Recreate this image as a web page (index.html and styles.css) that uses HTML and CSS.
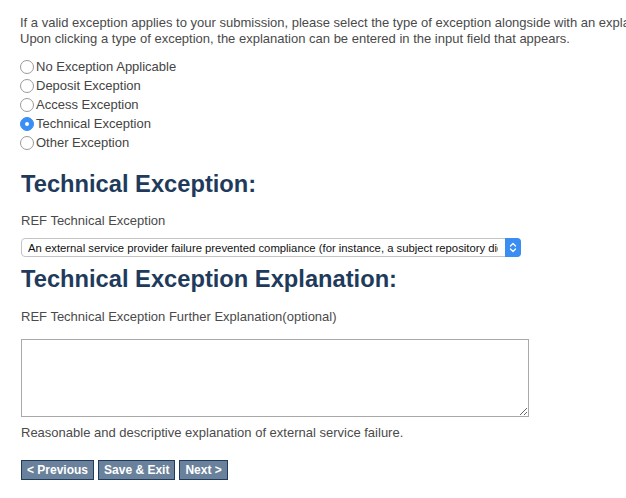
FILE: index.html
```html
<!DOCTYPE html>
<html>
<head>
<meta charset="utf-8">
<link rel="stylesheet" href="styles.css">
</head>
<body>
<div class="page">
  <p class="intro">If a valid exception applies to your submission, please select the type of exception alongside with an explanation.<br>Upon clicking a type of exception, the explanation can be entered in the input field that appears.</p>
  <div class="radios">
    <label class="radio"><input type="radio" name="ex">No Exception Applicable</label>
    <label class="radio"><input type="radio" name="ex">Deposit Exception</label>
    <label class="radio"><input type="radio" name="ex">Access Exception</label>
    <label class="radio"><input type="radio" name="ex" checked>Technical Exception</label>
    <label class="radio"><input type="radio" name="ex">Other Exception</label>
  </div>
  <h2 class="heading first">Technical Exception:</h2>
  <p class="label">REF Technical Exception</p>
  <div class="select-wrap">
    <select class="select">
      <option>An external service provider failure prevented compliance (for instance, a subject repository did not respond)</option>
    </select>
    <span class="stepper"><svg width="8" height="11" viewBox="0 0 8 11"><path d="M1.5 4 L4 1.5 L6.5 4 M1.5 7 L4 9.5 L6.5 7" fill="none" stroke="#fff" stroke-width="1.3" stroke-linecap="round" stroke-linejoin="round"/></svg></span>
  </div>
  <h2 class="heading second">Technical Exception Explanation:</h2>
  <p class="label second">REF Technical Exception Further Explanation(optional)</p>
  <textarea class="area"></textarea>
  <p class="help">Reasonable and descriptive explanation of external service failure.</p>
  <div class="buttons">
    <button class="btn">&lt; Previous</button>
    <button class="btn">Save &amp; Exit</button>
    <button class="btn">Next &gt;</button>
  </div>
</div>
</body>
</html>
```
FILE: styles.css
```css
html, body {
  margin: 0;
  padding: 0;
  background: #fff;
  overflow: hidden;
}
body {
  font-family: "Liberation Sans", Arial, sans-serif;
  font-size: 13px;
  color: #4a4a4a;
}
.page {
  padding: 15px 0 0 20px;
  width: 640px;
}
.intro {
  margin: 0;
  line-height: 16px;
  white-space: nowrap;
}
.radios {
  margin-top: 10px;
  display: flex;
  flex-direction: column;
}
.radio {
  display: flex;
  align-items: center;
  height: 19px;
  line-height: 19px;
  font-size: 13px;
  color: #444;
}
.radio input {
  appearance: none;
  -webkit-appearance: none;
  margin: 0 2px 0 0;
  width: 14px;
  height: 14px;
  border: 1px solid #9a9a9a;
  border-radius: 50%;
  background: #fff;
  box-sizing: border-box;
  position: relative;
}
.radio input:checked {
  border-color: #3a8ef5;
  background: #3a8ef5;
}
.radio input:checked::after {
  content: "";
  position: absolute;
  left: 4px;
  top: 4px;
  width: 4px;
  height: 4px;
  border-radius: 50%;
  background: #fff;
}
.heading {
  margin: 0;
  font-size: 23.7px;
  line-height: 28px;
  font-weight: bold;
  color: #1f3b5b;
  padding-left: 1px;
}
.heading.first {
  margin-top: 18px;
}
.heading.second {
  margin-top: 8px;
}
.label {
  margin: 15px 0 0 1px;
  line-height: 16px;
  color: #4a4a4a;
}
.label.second {
  margin-top: 16px;
}
.select-wrap {
  position: relative;
  margin: 9px 0 0 1px;
  width: 500px;
  height: 19px;
}
.select {
  appearance: none;
  -webkit-appearance: none;
  width: 500px;
  height: 19px;
  box-sizing: border-box;
  border: 1px solid #c4c4c4;
  border-radius: 4px;
  background: #fff;
  font-family: "Liberation Sans", Arial, sans-serif;
  font-size: 11.3px;
  color: #111;
  padding: 0 22px 0 6px;
  margin: 0;
}
.stepper {
  position: absolute;
  right: 0;
  top: 0;
  width: 16px;
  height: 19px;
  background: #3b8df3;
  border-radius: 0 4px 4px 0;
  display: flex;
  align-items: center;
  justify-content: center;
}
.area {
  display: block;
  margin: 14px 0 0 1px;
  width: 508px;
  height: 78px;
  box-sizing: border-box;
  border: 1px solid #a9a9a9;
  border-radius: 0;
  padding: 2px;
  font-family: "Liberation Sans", Arial, sans-serif;
}
.help {
  margin: 8px 0 0 1px;
  line-height: 16px;
  color: #4a4a4a;
}
.buttons {
  margin: 19px 0 0 1px;
  display: flex;
  gap: 4px;
}
.btn {
  height: 20px;
  box-sizing: border-box;
  border: 1px solid #1f3b5b;
  background: #6a819b;
  color: #fff;
  font-family: "Liberation Sans", Arial, sans-serif;
  font-weight: bold;
  font-size: 12px;
  padding: 0 5px;
  margin: 0;
  border-radius: 0;
  line-height: 18px;
}
```
